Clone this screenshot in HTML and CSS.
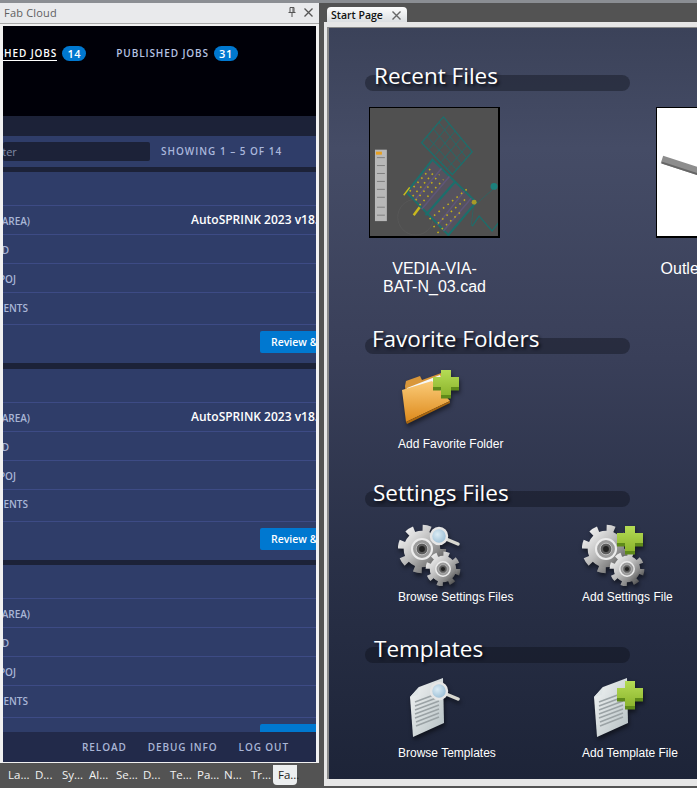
FILE: index.html
```html
<!DOCTYPE html>
<html lang="en">
<head>
    <meta charset="UTF-8">
    <title>Fab Cloud</title>
    <link rel="stylesheet" href="styles.css">
</head>
<body>
    <svg class="defs" width="0" height="0">
        <defs>
            <linearGradient id="steel" x1="0" y1="0" x2="1" y2="1">
                <stop offset="0" stop-color="#f6f6f6"/>
                <stop offset=".45" stop-color="#bdbdbd"/>
                <stop offset=".75" stop-color="#868686"/>
                <stop offset="1" stop-color="#3e3e3e"/>
            </linearGradient>
            <linearGradient id="green" x1="0" y1="0" x2="0" y2="1">
                <stop offset="0" stop-color="#b5dc55"/>
                <stop offset="1" stop-color="#8db52e"/>
            </linearGradient>
            <linearGradient id="paper" x1="0" y1="0" x2="1" y2="1">
                <stop offset="0" stop-color="#f4f6f6"/>
                <stop offset="1" stop-color="#b4bfc2"/>
            </linearGradient>
            <linearGradient id="orange" x1="0" y1="0" x2="0" y2="1">
                <stop offset="0" stop-color="#fbcb78"/>
                <stop offset="1" stop-color="#dd8a1c"/>
            </linearGradient>
            <radialGradient id="glass" cx=".4" cy=".4" r=".7">
                <stop offset="0" stop-color="#dcecf5"/>
                <stop offset="1" stop-color="#8fb6d0"/>
            </radialGradient>
            <symbol id="gear" viewBox="-30 -30 60 60">
                <circle r="24" fill="none" stroke="url(#steel)" stroke-width="10" stroke-dasharray="9 9.85"/>
                <circle r="22" fill="url(#steel)"/>
                <circle r="12" fill="#9b9b9b" stroke="#ececec" stroke-width="2.5"/>
                <circle r="7" fill="#5d5d5d" stroke="#c9c9c9"/>
                <circle r="3.5" fill="#222"/>
            </symbol>
            <symbol id="lens" viewBox="0 0 64 64">
                <path d="M48 17 L60 22" stroke="#d8d8d0" stroke-width="3.5" stroke-linecap="round"/>
                <circle cx="41" cy="14" r="8" fill="url(#glass)" stroke="#e6e6e6" stroke-width="2.5"/>
            </symbol>
            <symbol id="plus" viewBox="0 0 64 64">
                <path d="M43 6 H53 V13 H61 V23 H53 V31 H43 V23 H35 V13 H43 Z" fill="#5f8a1a" transform="translate(0 1.5)"/>
                <path d="M43 4 H53 V11 H61 V21 H53 V29 H43 V21 H35 V11 H43 Z" fill="url(#green)"/>
            </symbol>
            <symbol id="doc" viewBox="0 0 64 64">
                <path d="M12 20 L21 10 L45 1 L46 46 L15 60 Z" fill="url(#paper)"/>
                <path d="M12 20 L21 10 L20 18 Z" fill="#dfe5e6"/>
                <path d="M17 25 L41 16 M17 29 L41 20 M17 33 L41 24 M17 37 L41 28 M17 41 L41 32 M18 45 L41 36 M18 49 L41 40" stroke="#9aa2a5" stroke-width="1.5"/>
            </symbol>
            <symbol id="gears" viewBox="0 0 64 64">
                <use href="#gear" x="-1" y="2" width="50" height="50"/>
                <use href="#gear" x="27" y="29" width="36" height="36"/>
            </symbol>
        </defs>
    </svg>

    <div class="left-col">
        <div class="top-strip"></div>
        <div class="title-bar">
            <span class="title-text">Fab Cloud</span>
            <svg class="pin" width="8" height="10" viewBox="0 0 8 10"><path d="M2 .5 H6 V5.5 H2 Z M.5 5.5 H7.5 M4 5.5 V10 M5 1 V5" fill="none" stroke="#555"/></svg>
            <svg class="x-btn" width="9" height="9" viewBox="0 0 9 9"><path d="M.5 .5 L8.5 8.5 M8.5 .5 L.5 8.5" stroke="#555" stroke-width="1.3"/></svg>
        </div>
        <div class="webview">
            <div class="nav">
                <div class="nav-link nav-current">
                    <span class="nav-text">UNPUBLISHED JOBS</span>
                    <span class="badge">14</span>
                </div>
                <div class="nav-link">
                    <span class="nav-text">PUBLISHED JOBS</span>
                    <span class="badge">31</span>
                </div>
            </div>
            <div class="subbar"></div>
            <div class="filter-row">
                <div class="filter-input">Filter</div>
                <span class="showing">SHOWING 1 – 5 OF 14</span>
            </div>
            <div class="job-list">
                <div class="job">
                    <div class="job-head"></div>
                    <div class="job-row"><span class="job-label w-area">ZONE (AREA)</span><span class="job-value">AutoSPRINK 2023 v18.1</span></div>
                    <div class="job-row"><span class="job-label w-d">UPLOADED</span></div>
                    <div class="job-row"><span class="job-label w-poj">POJ</span></div>
                    <div class="job-row job-row-last"><span class="job-label w-ents">COMMENTS</span></div>
                    <div class="job-actions"><button class="review">Review &amp; Publish</button></div>
                </div>
                <div class="job">
                    <div class="job-head"></div>
                    <div class="job-row"><span class="job-label w-area">ZONE (AREA)</span><span class="job-value">AutoSPRINK 2023 v18.1</span></div>
                    <div class="job-row"><span class="job-label w-d">UPLOADED</span></div>
                    <div class="job-row"><span class="job-label w-poj">POJ</span></div>
                    <div class="job-row job-row-last"><span class="job-label w-ents">COMMENTS</span></div>
                    <div class="job-actions"><button class="review">Review &amp; Publish</button></div>
                </div>
                <div class="job">
                    <div class="job-head"></div>
                    <div class="job-row"><span class="job-label w-area">ZONE (AREA)</span></div>
                    <div class="job-row"><span class="job-label w-d">UPLOADED</span></div>
                    <div class="job-row"><span class="job-label w-poj">POJ</span></div>
                    <div class="job-row job-row-last"><span class="job-label w-ents">COMMENTS</span></div>
                    <div class="job-actions"><button class="review review-cut"></button></div>
                </div>
            </div>
            <div class="web-footer">
                <span>RELOAD</span>
                <span>DEBUG INFO</span>
                <span>LOG OUT</span>
            </div>
        </div>
        <div class="bottom-tabs">
            <span class="btab">La...</span>
            <span class="btab">D...</span>
            <span class="btab">Sy...</span>
            <span class="btab">Al...</span>
            <span class="btab">Se...</span>
            <span class="btab">D...</span>
            <span class="btab">Te...</span>
            <span class="btab">Pa...</span>
            <span class="btab">N...</span>
            <span class="btab">Tr...</span>
            <span class="btab btab-active">Fa...</span>
        </div>
    </div>

    <div class="right-col">
        <div class="top-strip"></div>
        <div class="doc-tabs">
            <div class="doc-tab">
                <span>Start Page</span>
                <svg width="9" height="9" viewBox="0 0 9 9"><path d="M.5 .5 L8.5 8.5 M8.5 .5 L.5 8.5" stroke="#666" stroke-width="1.4"/></svg>
            </div>
        </div>
        <div class="doc-frame">
            <div class="start-page">
                <section class="recent">
                    <h2 class="sec-title">Recent Files</h2>
                    <div class="recent-files">
                        <div class="recent-file">
                            <svg class="thumb thumb-dark" viewBox="0 0 129 129">
                                <g class="cad">
                                    <rect x="5" y="42" width="12" height="72" fill="#b8b8b8"/>
                                    <rect x="6" y="44" width="6" height="3" fill="#e8a020"/>
                                    <path d="M7 50 H15 M7 58 H15 M7 66 H15 M7 74 H15 M7 82 H15 M7 90 H15 M7 100 H15 M7 108 H15" stroke="#808080" stroke-width="1"/>
                                    <circle cx="46" cy="110" r="18" fill="none" stroke="#5a5a5a" stroke-width=".7"/>
                                    <path d="M63 52 L107 95 L79 128 L37 85 Z" fill="#55525e"/>
                                    <g fill="none" stroke="#1c6f6c">
                                        <path d="M74 9 L103 44 L83 67 L52 35 Z" stroke-width="1.3"/>
                                        <path d="M69 14 L97 50 M63 20 L92 56 M57 28 L87 62 M80 16 L60 41 M86 23 L66 47 M92 30 L72 54 M98 38 L78 61" stroke-width=".8"/>
                                        <path d="M63 52 L107 95 L79 128 L37 85 Z" stroke-width="2"/>
                                        <path d="M86 74 L56 108" stroke-width="2.2"/>
                                        <path d="M72 61 L45 93 M80 69 L52 102 M95 84 L68 118 M102 91 L74 124" stroke="#5f5678" stroke-width="1.5"/>
                                        <path d="M103 119 L110 109 L123 124 L130 115" stroke-width="1.3"/>
                                        <path d="M105 93 L102 119 M108 96 L126 80" stroke-width=".6"/>
                                    </g>
                                    <g fill="none" stroke="#c4b01a" stroke-width="1.6" stroke-dasharray="1.6 4.2">
                                        <path d="M40 84 L62 60"/>
                                        <path d="M43 89 L66 63"/>
                                        <path d="M46 93 L70 67"/>
                                        <path d="M50 98 L74 72"/>
                                        <path d="M60 112 L100 80"/>
                                        <path d="M64 120 L96 92"/>
                                        <path d="M68 126 L92 104"/>
                                    </g>
                                    <path d="M44 108 L50 100" stroke="#c8b81e" stroke-width="2.5"/>
                                    <path d="M34 88 L40 80" stroke="#c8b81e" stroke-width="1.5"/>
                                    <circle cx="125" cy="79" r="3.5" fill="#1c807c"/>
                                    <circle cx="105" cy="95" r="2.5" fill="#a89a28"/>
                                </g>
                            </svg>
                            <div class="file-name">VEDIA-VIA-<br>BAT-N_03.cad</div>
                        </div>
                        <div class="recent-file">
                            <svg class="thumb" viewBox="0 0 129 129">
                                <path d="M5 52 L110 86" stroke="#8d8d8d" stroke-width="8"/>
                                <path d="M5 55 L110 89" stroke="#666" stroke-width="2"/>
                            </svg>
                            <div class="file-name">Outlet-Fitting.cad</div>
                        </div>
                    </div>
                </section>

                <section class="favorites">
                    <h2 class="sec-title">Favorite Folders</h2>
                    <div class="tiles">
                        <div class="tile">
                            <svg class="icon" viewBox="0 0 64 64">
                                <path d="M7 20 L8 15 L22 10 L24 14 L46 6 L50 30 L10 50 Z" fill="#d9973a"/>
                                <path d="M9 22 L42 9 L50 32 L12 50 Z" fill="#f5f7f8"/>
                                <path d="M4 24 L34 15 L52 35 L8 56 Z" fill="url(#orange)"/>
                                <path d="M8 56 L52 35 L52 37 L9 58 Z" fill="#a8660f"/>
                                <use href="#plus" width="64" height="64"/>
                            </svg>
                            <div class="tile-label">Add Favorite Folder</div>
                        </div>
                    </div>
                </section>

                <section class="settings">
                    <h2 class="sec-title">Settings Files</h2>
                    <div class="tiles">
                        <div class="tile">
                            <svg class="icon" viewBox="0 0 64 64">
                                <use href="#gears" width="64" height="64"/>
                                <use href="#lens" width="64" height="64"/>
                            </svg>
                            <div class="tile-label">Browse Settings Files</div>
                        </div>
                        <div class="tile">
                            <svg class="icon" viewBox="0 0 64 64">
                                <use href="#gears" width="64" height="64"/>
                                <use href="#plus" width="64" height="64"/>
                            </svg>
                            <div class="tile-label">Add Settings File</div>
                        </div>
                    </div>
                </section>

                <section class="templates">
                    <h2 class="sec-title">Templates</h2>
                    <div class="tiles">
                        <div class="tile">
                            <svg class="icon" viewBox="0 0 64 64">
                                <use href="#doc" width="64" height="64"/>
                                <use href="#lens" width="64" height="64"/>
                            </svg>
                            <div class="tile-label">Browse Templates</div>
                        </div>
                        <div class="tile">
                            <svg class="icon" viewBox="0 0 64 64">
                                <use href="#doc" width="64" height="64"/>
                                <use href="#plus" width="64" height="64"/>
                            </svg>
                            <div class="tile-label">Add Template File</div>
                        </div>
                    </div>
                </section>
            </div>
        </div>
    </div>
</body>
</html>
```

FILE: styles.css
```css
html, body {
    margin: 0;
    height: 100%;
}
body {
    display: flex;
    width: 697px;
    height: 788px;
    overflow: hidden;
    background-color: #535353;
    font-family: "Open Sans", Arial, sans-serif;
}
.defs {
    position: absolute;
}
.top-strip {
    height: 3px;
    background-color: #8b8e93;
}

/* left dock panel */
.left-col {
    width: 319px;
    flex: none;
    display: flex;
    flex-direction: column;
}
.title-bar {
    height: 18px;
    display: flex;
    align-items: center;
    padding: 0 6px 2px 4px;
    background-color: #e9eaec;
    border-bottom: 1px solid #a9a9a9;
}
.title-text {
    flex: 1;
    font-size: 11px;
    letter-spacing: .2px;
    color: #5f5f5f;
}
.x-btn {
    margin-left: 8px;
}
.webview {
    height: 736px;
    display: flex;
    flex-direction: column;
    overflow: hidden;
    border: solid #f1f1f1;
    border-width: 2px 3px 1px 3px;
    color: #fff;
}
.nav {
    height: 90px;
    flex: none;
    display: flex;
    justify-content: flex-end;
    gap: 30px;
    padding: 20px 78px 0 0;
    box-sizing: border-box;
    background-color: #000008;
    white-space: nowrap;
}
.nav-link {
    display: flex;
    align-items: flex-start;
    gap: 5px;
    flex: none;
}
.nav-text {
    font-size: 10px;
    font-weight: 600;
    letter-spacing: .9px;
    line-height: 15px;
    color: #b5c3e3;
}
.nav-current .nav-text {
    color: #fff;
    border-bottom: 1px solid #fff;
    line-height: 13px;
    padding-top: 1px;
}
.badge {
    width: 24px;
    height: 15px;
    border-radius: 8px;
    background-color: #0078d0;
    font-size: 11px;
    font-weight: 600;
    line-height: 15px;
    letter-spacing: .6px;
    text-align: center;
    color: #fff;
}
.subbar {
    height: 20px;
    flex: none;
    background-color: #1c2238;
}
.filter-row {
    height: 31px;
    flex: none;
    display: flex;
    align-items: center;
    padding-bottom: 1px;
    box-sizing: border-box;
    background-color: #2f3d69;
    white-space: nowrap;
}
.filter-input {
    width: 147px;
    height: 19px;
    flex: none;
    overflow: hidden;
    border-radius: 2px;
    background-color: #1c2238;
    font-size: 11px;
    line-height: 20px;
    text-indent: -12px;
    color: #808aa6;
}
.showing {
    margin-left: 11px;
    font-size: 10px;
    font-weight: 600;
    letter-spacing: .98px;
    color: #a9b7dc;
}
.job-list {
    flex: 1;
    overflow: hidden;
    min-height: 0;
    background-color: #1c2238;
    padding-top: 5px;
}
.job {
    background-color: #2f3d69;
    margin-bottom: 5.5px;
}
.job-head {
    height: 34px;
    box-sizing: border-box;
    border-bottom: 1px solid #3d4b85;
}
.job-row {
    height: 29px;
    box-sizing: border-box;
    display: flex;
    align-items: center;
    padding-top: 2px;
    border-bottom: 1px solid #3d4b85;
    white-space: nowrap;
}
.job-row-last {
    height: 32px;
    padding: 0 0 2px;
}
.job-label {
    flex: none;
    display: flex;
    justify-content: flex-end;
    font-size: 10px;
    font-weight: 600;
    color: #a9b6d6;
}
.w-area { width: 27px; }
.w-d { width: 6px; }
.w-poj { width: 13px; }
.w-ents { width: 25px; }
.job-value {
    flex: none;
    margin: -3px 0 0 161px;
    font-size: 12px;
    font-weight: 600;
    color: #fff;
}
.job-actions {
    height: 38px;
    padding: 6px 0 0 257px;
    box-sizing: border-box;
    display: flex;
    white-space: nowrap;
}
.review {
    height: 22px;
    flex: none;
    padding: 0 11px;
    border: none;
    border-radius: 2px 0 0 2px;
    background-color: #0078d0;
    font-family: "Open Sans", Arial, sans-serif;
    font-size: 10.5px;
    font-weight: 600;
    color: #fff;
}
.review-cut {
    width: 100px;
}
.web-footer {
    height: 30px;
    flex: none;
    display: flex;
    justify-content: flex-end;
    align-items: center;
    gap: 21px;
    padding-right: 27px;
    background-color: #222a4a;
    font-size: 10px;
    font-weight: 600;
    letter-spacing: .9px;
    color: #a9b6d6;
}
.bottom-tabs {
    display: flex;
    padding: 2px 0 0 8px;
}
.btab {
    width: 27px;
    flex: none;
    font-size: 11.5px;
    line-height: 20px;
    color: #f2f2f2;
}
.btab-active {
    margin-left: -5px;
    width: 24px;
    padding-left: 5px;
    box-sizing: border-box;
    border-radius: 0 0 4px 4px;
    background-color: #eceeef;
    color: #222;
}

/* document area */
.right-col {
    flex: 1;
    min-width: 0;
    display: flex;
    flex-direction: column;
    padding-left: 5px;
    margin-right: -30px;
}
.right-col .top-strip {
    margin-left: -5px;
}
.doc-tabs {
    height: 19px;
    padding: 4px 0 0 3px;
    box-sizing: border-box;
}
.doc-tab {
    width: 80px;
    height: 16px;
    box-sizing: border-box;
    display: flex;
    align-items: center;
    justify-content: space-between;
    padding: 0 6px 0 4px;
    border-radius: 4px 4px 0 0;
    background: linear-gradient(#fdfdfd, #d9dcdf);
    font-size: 10.5px;
    font-weight: 600;
    color: #111;
}
.doc-frame {
    height: 764px;
    box-sizing: border-box;
    border: solid #e6e6e6;
    border-width: 5px 3px 7px 3px;
    background-color: #888;
    padding: 1px 0 0 2px;
    overflow: hidden;
}
.start-page {
    height: 100%;
    box-sizing: border-box;
    padding: 47px 0 0 36px;
    overflow: hidden;
    background: linear-gradient(#3b4259, #454c66 16%, #393f59 44%, #2a3148 70%, #1d2438);
    color: #fff;
}
.sec-title {
    width: 265px;
    height: 16px;
    margin: 0;
    padding-left: 9px;
    box-sizing: border-box;
    border-radius: 8px;
    background-color: rgba(10, 12, 20, .38);
    font-size: 22.5px;
    font-weight: 400;
    line-height: 2px;
    white-space: nowrap;
    text-shadow: 2px 2px 3px #0c0f18;
}
.favorites .sec-title { padding-left: 7px; }
.settings .sec-title { padding-left: 8px; line-height: 4px; }
.templates .sec-title { line-height: 4px; }
.recent-files {
    display: flex;
    gap: 156px;
    margin: 16px 0 0 4px;
}
.recent-file {
    width: 131px;
    flex: none;
}
.thumb {
    display: block;
    width: 131px;
    height: 131px;
    box-sizing: border-box;
    border: solid #000;
    border-width: 1px 2px 2px 1px;
    background-color: #fff;
}
.thumb-dark {
    background-color: #505050;
}
.cad {
    filter: blur(.5px);
}
.file-name {
    margin-top: 22px;
    font-family: "Liberation Sans", Arial, sans-serif;
    font-size: 16px;
    line-height: 18px;
    text-align: center;
    white-space: nowrap;
}
.favorites {
    margin-top: 42px;
}
.settings {
    margin-top: 40px;
}
.templates {
    margin-top: 43px;
}
.tiles {
    display: grid;
    grid-template-columns: repeat(2, 184px);
    padding-left: 33px;
}
.icon {
    display: block;
    width: 64px;
    height: 64px;
    filter: drop-shadow(1px 3px 2px rgba(0, 0, 0, .5));
}
.favorites .icon { margin-top: 12px; }
.settings .icon { margin-top: 15px; }
.templates .icon { margin-top: 14px; }
.tile-label {
    font-family: "Liberation Sans", Arial, sans-serif;
    font-size: 12px;
    line-height: 14px;
    white-space: nowrap;
}
.favorites .tile-label { margin-top: 7px; }
.settings .tile-label { margin-top: 4px; }
.templates .tile-label { margin-top: 5px; }
```
